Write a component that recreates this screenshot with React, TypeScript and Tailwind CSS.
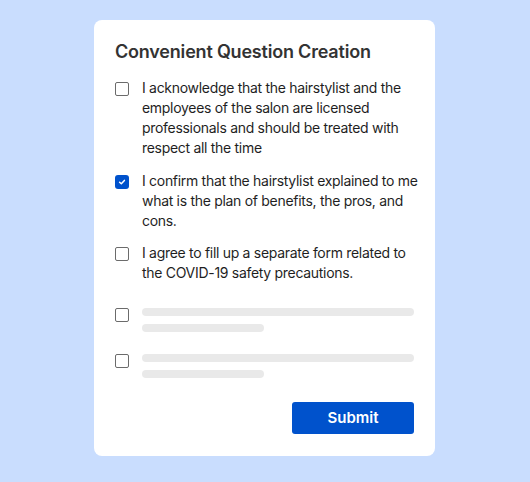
import React from "react";

const font = { fontFamily: "Inter, 'Noto Sans', 'Liberation Sans', sans-serif" };

function Box({ checked = false, className = "" }: { checked?: boolean; className?: string }) {
  if (checked) {
    return (
      <div className={`w-[14px] h-[14px] shrink-0 rounded-[3px] bg-[#0052cc] flex items-center justify-center ${className}`}>
        <svg width="10" height="10" viewBox="0 0 10 10" fill="none">
          <polyline points="2.6,5.2 4.3,6.8 7.4,3.4" stroke="white" strokeWidth="1.5" strokeLinecap="round" strokeLinejoin="round" />
        </svg>
      </div>
    );
  }
  return <div className={`w-[14px] h-[14px] shrink-0 rounded-[2px] border-[1.5px] border-[#6b6b6b] bg-white ${className}`} />;
}

function Item({ text, checked = false, className = "" }: { text: string; checked?: boolean; className?: string }) {
  return (
    <div className={`flex gap-[13px] ${className}`}>
      <Box checked={checked} className="mt-[4px]" />
      <p className="flex-1 text-[14px] leading-[20px] tracking-[-0.3px] text-[#1f1f1f]">{text}</p>
    </div>
  );
}

function Skeleton({ className = "" }: { className?: string }) {
  return (
    <div className={`flex gap-[13px] ${className}`}>
      <Box />
      <div className="flex flex-col gap-[8px]">
        <div className="w-[272px] h-[8px] rounded-full bg-[#e9e9e9]" />
        <div className="w-[122px] h-[8px] rounded-full bg-[#e9e9e9]" />
      </div>
    </div>
  );
}

export default function App() {
  return (
    <div className="w-[530px] h-[482px] bg-[#c9ddfe] pt-[20px] pl-[94px]" style={font}>
      <div className="w-[341px] bg-white rounded-[8px] pt-[18px] pl-[21px] pr-[13px] pb-[22px] flex flex-col">
        <h1 className="text-[18px] leading-[28px] font-semibold tracking-[-0.2px] text-[#333333]">Convenient Question Creation</h1>
        <Item
          className="mt-[12px]"
          text="I acknowledge that the hairstylist and the employees of the salon are licensed professionals and should be treated with respect all the time"
        />
        <Item
          className="mt-[13px]"
          checked
          text="I confirm that the hairstylist explained to me what is the plan of benefits, the pros, and cons."
        />
        <Item className="mt-[12px]" text="I agree to fill up a separate form related to the COVID-19 safety precautions." />
        <Skeleton className="mt-[25px]" />
        <Skeleton className="mt-[22px]" />
        <button className="self-end mr-[8px] mt-[24px] w-[122px] h-[32px] rounded-[3px] bg-[#0052cc] text-white text-[15px] font-semibold">
          Submit
        </button>
      </div>
    </div>
  );
}
